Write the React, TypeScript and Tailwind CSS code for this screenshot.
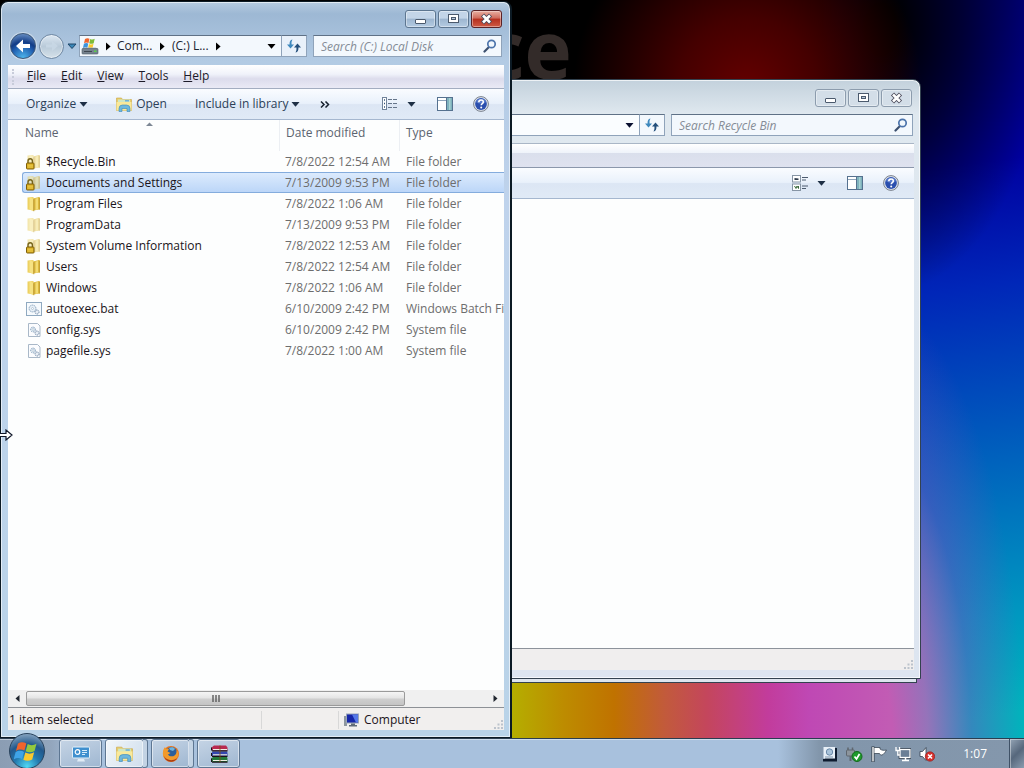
import type { ReactNode } from 'react';
import clsx from 'clsx';

interface FileRow {
    name: string;
    date: string;
    type: string;
    icon: 'locked' | 'folder' | 'faded' | 'batch' | 'system';
}

const files: FileRow[] = [
    { name: '$Recycle.Bin', date: '7/8/2022 12:54 AM', type: 'File folder', icon: 'locked' },
    { name: 'Documents and Settings', date: '7/13/2009 9:53 PM', type: 'File folder', icon: 'locked' },
    { name: 'Program Files', date: '7/8/2022 1:06 AM', type: 'File folder', icon: 'folder' },
    { name: 'ProgramData', date: '7/13/2009 9:53 PM', type: 'File folder', icon: 'faded' },
    { name: 'System Volume Information', date: '7/8/2022 12:53 AM', type: 'File folder', icon: 'locked' },
    { name: 'Users', date: '7/8/2022 12:54 AM', type: 'File folder', icon: 'folder' },
    { name: 'Windows', date: '7/8/2022 1:06 AM', type: 'File folder', icon: 'folder' },
    { name: 'autoexec.bat', date: '6/10/2009 2:42 PM', type: 'Windows Batch File', icon: 'batch' },
    { name: 'config.sys', date: '6/10/2009 2:42 PM', type: 'System file', icon: 'system' },
    { name: 'pagefile.sys', date: '7/8/2022 1:00 AM', type: 'System file', icon: 'system' }
];

const menus = ['File', 'Edit', 'View', 'Tools', 'Help'];

/* ---------- icons ---------- */

function DownArrow({ className = 'text-[#1e2f45]' }: { className?: string }) {
    return (
        <svg width="9" height="5" viewBox="0 0 9 5" className={clsx('shrink-0', className)}>
            <path d="M0.5 0h8L4.5 4.8z" fill="currentColor" />
        </svg>
    );
}

function RightArrow() {
    return (
        <svg width="5" height="9" viewBox="0 0 5 9" className="shrink-0">
            <path d="M0 0.5v8L4.6 4.5z" fill="#000" />
        </svg>
    );
}

function FileIcon({ kind }: { kind: FileRow['icon'] }) {
    if (kind === 'batch' || kind === 'system') {
        return (
            <svg width="16" height="16" viewBox="0 0 16 16" className="shrink-0">
                {kind === 'batch' ? (
                    <rect x="0.5" y="1.5" width="15" height="13" fill="#f6fafd" stroke="#8fa9c0" />
                ) : (
                    <path d="M2.5 1.5h9l2.5 2.5v10.500h-11.500z" fill="#fbfcfe" stroke="#a9b8c8" />
                )}
                <circle cx={kind === 'batch' ? 6.5 : 7} cy="7.5" r={kind === 'batch' ? 3.4 : 2.4} fill="#e8f0f7" stroke="#7f9cb8" strokeDasharray="1.3 0.8" />
                <circle cx={kind === 'batch' ? 6.5 : 7} cy="7.5" r="1" fill="#fff" stroke="#9db3c8" strokeWidth="0.6" />
                <circle cx="11" cy="11" r="2" fill="#e8eef5" stroke="#6d87a5" strokeDasharray="1.2 0.6" />
            </svg>
        );
    }
    const pale = kind !== 'folder';
    return (
        <svg width="16" height="16" viewBox="0 0 16 16" className="shrink-0">
            <g opacity={pale ? 0.5 : 1}>
                <path d="M1.500 1.500l6-0.500v13.500l-6-1z" fill="#edd161" />
                <path d="M7 2.500l6-1.500 1 0.500v12l-7 1z" fill="#dcb93f" />
                <path d="M3.500 1l4 2v12.300l-4-2z" fill="#f6e283" />
                <path d="M7.800 3.200v12" stroke="#b8932c" strokeWidth="0.900" />
                <path d="M9.500 2.400l2.500-0.500v11.700l-2.500 0.500z" fill="#f3dc74" />
                <path d="M13.500 2v11.500" stroke="#c09d35" strokeWidth="0.800" />
            </g>
            {kind === 'locked' && (
                <g>
                    <path d="M2 9.500v-2.500a2.200 2.200 0 0 1 4.400 0v2.500" fill="none" stroke="#77651c" strokeWidth="1.400" />
                    <rect x="0.500" y="9" width="7.500" height="6" rx="0.800" fill="#d9ad1c" stroke="#7d5f0c" />
                    <path d="M1.500 11.200h5.500M1.500 13h5.500" stroke="#f3da6a" strokeWidth="0.700" />
                </g>
            )}
        </svg>
    );
}

function ExplorerIcon({ size = 16 }: { size?: number }) {
    return (
        <svg width={size} height={size} viewBox="0 0 16 16" className="shrink-0">
            <path d="M0.500 2h5l1 1.500h9v11h-15z" fill="#e8cd6a" stroke="#c9a545" strokeWidth="0.600" />
            <rect x="2" y="3.500" width="12" height="4" fill="#cfe7c4" />
            <rect x="9" y="4" width="4" height="1.500" fill="#6fb2d8" />
            <path d="M0.500 6h15v8.500h-15z" fill="#f9e99a" />
            <path d="M3 15.500v-3a3.500 3.500 0 0 1 3.500-3.500h4a3.500 3.500 0 0 1 3.500 3.500v3h-3v-3h-5v3z" fill="#6db8dd" stroke="#3b88b8" strokeWidth="0.600" />
        </svg>
    );
}

function WindowsFlag({ size }: { size: number }) {
    return (
        <svg width={size} height={size} viewBox="0 0 20 20">
            <path d="M3 4.500c2-1.500 4.500-1.500 6.500-0.300L8 9.700c-2-1.200-4.500-1-6.500 0.300z" fill="#f0642c" />
            <path d="M10.500 4.700c2 1.200 4.500 1.200 6.800-0.200l-1.500 5.500c-2.200 1.300-4.700 1.400-6.800 0.200z" fill="#93c83e" />
            <path d="M1.200 11c2-1.300 4.500-1.500 6.500-0.300L6.200 16.200c-2-1.200-4.500-1-6.500 0.300z" fill="#3fa4e8" />
            <path d="M8.700 11.200c2.200 1.200 4.600 1.100 6.800-0.200l-1.500 5.500c-2.200 1.300-4.700 1.400-6.800 0.200z" fill="#fbc92e" />
        </svg>
    );
}

function DriveIcon() {
    return (
        <svg width="18" height="17" viewBox="0 0 18 17" className="shrink-0">
            <path d="M4 1c1.500-1 3-1 4.500-0.300L7.500 5C6 4.300 4.500 4.300 3 5.200z" fill="#f0642c" />
            <path d="M9.200 1c1.500 0.800 3 0.700 4.500-0.200l-1 4.400c-1.500 0.800-3 0.900-4.500 0.100z" fill="#7ebb38" />
            <path d="M2.900 5.800c1.500-0.900 3-0.900 4.400-0.200l-1 4.400c-1.500-0.800-3-0.700-4.400 0.200z" fill="#3c93dc" />
            <path d="M8 5.900c1.500 0.800 3 0.700 4.500-0.100l-1 4.400c-1.500 0.800-3 0.800-4.500 0z" fill="#fbc92e" />
            <path d="M2.500 9.500h12.500l2 2h-16z" fill="#b4bec8" />
            <rect x="1" y="10.500" width="16" height="5.500" rx="0.800" fill="#76828e" stroke="#4f5a66" strokeWidth="0.600" />
            <path d="M3 13.500h8" stroke="#3e4750" />
            <rect x="13" y="12.500" width="2.500" height="1.500" fill="#59d04a" />
        </svg>
    );
}

function RefreshIcon() {
    return (
        <svg width="16" height="14" viewBox="0 0 16 14">
            <path d="M6.500 0.500C4 1 3.400 2.800 3.600 5.500H1L4.500 9.500 8 5.500H5.600C5.400 3.500 5.600 2 6.500 0.500z" fill="#3e88bd" />
            <path d="M9.500 13.500c2.500-0.500 3.100-2.300 2.900-5H15L11.500 4.500 8 8.500h2.400c0.200 2 0 3.500-0.900 5z" fill="#24507c" />
        </svg>
    );
}

function SearchIcon() {
    return (
        <svg width="14" height="14" viewBox="0 0 14 14" className="shrink-0">
            <path d="M5.500 8.500L1.500 12.500" stroke="#3b4f6e" strokeWidth="2.200" strokeLinecap="round" />
            <circle cx="8.500" cy="5" r="3.700" fill="#f2f8fd" stroke="#4c74ab" strokeWidth="1.700" />
        </svg>
    );
}

function DetailsIcon() {
    return (
        <svg width="16" height="14" viewBox="0 0 16 14">
            <rect x="0.500" y="0.500" width="4" height="12" fill="#fff" stroke="#71839a" />
            <path d="M2 3h1M2 6.500h1M2 10h1" stroke="#35537a" strokeWidth="1.400" />
            <path d="M6 2.500h4M11 2.500h4M6 6.500h4M11 6.500h4M6 10.500h4M11 10.500h4" stroke="#65758a" />
        </svg>
    );
}

function TilesIcon() {
    return (
        <svg width="16" height="16" viewBox="0 0 16 16">
            <rect x="0.500" y="0.500" width="8" height="6.500" fill="#fff" stroke="#8795a5" />
            <rect x="0.500" y="9" width="8" height="6.500" fill="#fff" stroke="#8795a5" />
            <path d="M2.500 3v2h4v-1.500z" fill="#2f3d4e" />
            <path d="M2.500 11l1.500 2.500L5 11l1.500 2.500V11" fill="none" stroke="#3c6a3c" />
            <path d="M10 2.500h6M10 5h4M10 11h6M10 13.500h4" stroke="#4c5b6e" />
        </svg>
    );
}

function PaneIcon() {
    return (
        <svg width="16" height="14" viewBox="0 0 16 14">
            <rect x="0.500" y="0.500" width="15" height="13" fill="#fff" stroke="#55718f" />
            <path d="M1 3.500h9" stroke="#8fa5bb" />
            <rect x="10" y="1" width="5" height="12" fill="#7fb3bd" />
            <rect x="12" y="1" width="1.500" height="12" fill="#a8d2d4" />
            <path d="M9.500 1v12" stroke="#55718f" />
        </svg>
    );
}

function HelpIcon() {
    return (
        <svg width="16" height="16" viewBox="0 0 16 16">
            <circle cx="8" cy="8" r="7.400" fill="#dfe5ee" stroke="#79808c" />
            <circle cx="8" cy="8" r="5.900" fill="#2b4fae" />
            <path d="M3 6a5.500 5.500 0 0 1 10 0c-3 2-7 2-10 0z" fill="#6d8fd8" opacity="0.700" />
            <path d="M5.800 6.200c0-3 4.500-2.900 4.500-0.300 0 1.700-2.100 1.700-2.100 3.400" fill="none" stroke="#fff" strokeWidth="1.600" />
            <circle cx="8.200" cy="11.400" r="1" fill="#fff" />
        </svg>
    );
}

function Grip() {
    return (
        <svg width="11" height="11" viewBox="0 0 11 11" className="self-end">
            <path d="M8 1h2v2h-2zM8 4.500h2v2h-2zM8 8h2v2h-2zM4.500 4.500h2v2h-2zM4.500 8h2v2h-2zM1 8h2v2h-2z" fill="#bcc3cc" />
        </svg>
    );
}

/* ---------- window parts ---------- */

function CaptionButtons({ active = false }: { active?: boolean }) {
    const base = 'flex h-[18px] w-[31px] items-center justify-center rounded-[3px] border shadow-[inset_0_0_0_1px_rgba(255,255,255,0.4)]';
    const plain = active
        ? 'border-[#5d7690] bg-[linear-gradient(#c3d5e8_45%,#9db6d0_50%,#b4cbe2)]'
        : 'border-[#8c9cad] bg-[#d3dee8]';
    return (
        <div className="flex justify-end gap-[2px]">
            <button aria-label="Minimize" className={clsx(base, plain)}>
                <svg width="13" height="12" viewBox="0 0 13 12">
                    <rect x="1.500" y="6.500" width="10" height="4" rx="0.500" fill="#fff" stroke="#4b5a6d" />
                </svg>
            </button>
            <button aria-label="Maximize" className={clsx(base, plain)}>
                <svg width="13" height="12" viewBox="0 0 13 12">
                    <rect x="1.500" y="1.500" width="10" height="8" fill="#fff" stroke="#4b5a6d" />
                    <rect x="4.500" y="4.500" width="4" height="2" fill="#b8c8da" stroke="#4b5a6d" />
                </svg>
            </button>
            <button
                aria-label="Close"
                className={clsx(base, active ? 'border-[#5b2226] bg-[linear-gradient(#e3a193_10%,#cf6a5b_45%,#b52f1e_50%,#cf5a44)]' : plain)}
            >
                <svg width="13" height="12" viewBox="0 0 13 12">
                    <path d="M2.500 2l8 8M10.500 2l-8 8" stroke="#4b4a5a" strokeWidth="4.400" />
                    <path d="M3 2.500l7 7M10 2.500l-7 7" stroke="#fff" strokeWidth="2.600" />
                </svg>
            </button>
        </div>
    );
}

function SearchBox({ id, text, className }: { id: string; text: string; className: string }) {
    return (
        <div className={clsx('flex h-[22px] items-center border border-[#8fa3ba] border-t-[#5f7186] bg-[#f3f8fd] pr-1 pl-[7px]', className)}>
            <input
                id={id}
                type="text"
                aria-label={text}
                placeholder={text}
                className="h-full w-full min-w-0 bg-transparent italic outline-none placeholder:text-[#858c96]"
            />
            <SearchIcon />
        </div>
    );
}

function ToolButton({ label, children, className }: { label?: string; children: ReactNode; className?: string }) {
    return (
        <button aria-label={label} className={clsx('flex items-center whitespace-nowrap text-[#2c3f58]', className)}>
            {children}
        </button>
    );
}

const toolbarStyle = 'flex h-[31px] shrink-0 items-center border-b border-[#a5b7cf] bg-[linear-gradient(#fafcff,#e9f1fb_48%,#dce6f4_52%,#e0eaf6)]';

function BackWindow() {
    return (
        <section
            aria-label="Recycle Bin"
            className="absolute top-[79px] right-[103px] bottom-[59px] left-[400px] flex flex-col rounded-t-lg border border-[#33424f] bg-[linear-gradient(#c3d1dc,#dfe8ef_34px,#dde5f0)] px-[6px] pb-[8px] shadow-[inset_0_0_0_1px_rgba(255,255,255,0.7)]"
        >
            <div className="pt-[9px] pr-[2px]">
                <CaptionButtons />
            </div>
            <div className="flex items-center pt-[7px] pr-px pb-[7px]">
                <div className="flex h-[22px] flex-1 items-center justify-end border border-[#8fa3ba] border-t-[#5f7186] bg-[#fafdff] pr-[5px]">
                    <button aria-label="Previous locations">
                        <DownArrow className="text-[#0a1030]" />
                    </button>
                </div>
                <button aria-label="Refresh" className="flex h-[22px] w-[25px] items-center justify-center border border-l-0 border-[#8fa3ba] border-t-[#5f7186] bg-[#f3f8fd]">
                    <RefreshIcon />
                </button>
                <SearchBox id="search-bin" text="Search Recycle Bin" className="ml-[6px] w-[242px]" />
            </div>
            <div className="h-[25px] shrink-0 border-t border-b border-t-[#a9b6c6] border-b-[#8b97ab] bg-[linear-gradient(#ffffff,#eff3fa_38%,#dadfec_40%,#dfe2ef)]" />
            <div className={clsx(toolbarStyle, 'justify-end pr-[15px]')}>
                <ToolButton label="Change your view">
                    <TilesIcon />
                </ToolButton>
                <ToolButton label="More options" className="ml-[9px]">
                    <DownArrow />
                </ToolButton>
                <ToolButton label="Show the preview pane" className="ml-[21px]">
                    <PaneIcon />
                </ToolButton>
                <ToolButton label="Get help" className="ml-[20px]">
                    <HelpIcon />
                </ToolButton>
            </div>
            <div className="flex-1 bg-[#fdfefe]" />
            <div className="flex h-[22px] shrink-0 justify-end border-t border-[#8d939b] bg-[#f0eeee]">
                <Grip />
            </div>
        </section>
    );
}

function NavBar() {
    return (
        <div className="flex items-center pt-[7px] pb-[8px]">
            <button
                aria-label="Back"
                className="my-[-3px] ml-[2px] flex size-[26px] shrink-0 items-center justify-center rounded-full border border-[#3e5878] bg-[radial-gradient(circle_at_50%_100%,#4fb8ee,#1f5cae_45%,#123c86_60%,#7fa6d6)] shadow-[0_0_0_1px_rgba(255,255,255,0.4)]"
            >
                <svg width="16" height="14" viewBox="0 0 16 14">
                    <path d="M8 0.500L1 7l7 6.500V9h7V5H8z" fill="#fff" />
                </svg>
            </button>
            <button
                aria-label="Forward"
                className="my-[-3px] ml-[3px] flex size-[25px] shrink-0 items-center justify-center rounded-full border border-[#6f88a3] bg-[linear-gradient(#dce7f2,#b9cad9_50%,#d5e1ea)] shadow-[inset_0_0_0_1px_rgba(255,255,255,0.4)]"
            >
                <svg width="14" height="12" viewBox="0 0 14 12">
                    <path d="M7 1l6 5-6 5V7.500H1V4.500h6z" fill="#c9d8e6" opacity="0.800" />
                </svg>
            </button>
            <button aria-label="Recent pages" className="ml-[3px]">
                <svg width="10" height="7" viewBox="0 0 10 7">
                    <path d="M1 1h8L5 5.500z" fill="#3a87b8" stroke="#1f4668" />
                </svg>
            </button>
            <div className="ml-[2px] flex h-[22px] w-[203px] items-center border border-[#8fa3ba] border-t-[#5f7186] bg-[#f3f8fd] pl-px">
                <DriveIcon />
                <div className="ml-[7px] flex flex-1 items-center">
                    <RightArrow />
                    <button className="ml-[6px] w-[37px] text-left text-[#1c2430]">Com...</button>
                    <span className="ml-[6px]">
                        <RightArrow />
                    </span>
                    <button className="ml-[7px] w-[38px] text-left whitespace-nowrap text-[#1c2430]">(C:) L...</button>
                    <span className="ml-[6px]">
                        <RightArrow />
                    </span>
                </div>
                <button aria-label="Previous locations" className="pr-[5px]">
                    <DownArrow className="text-black" />
                </button>
            </div>
            <button aria-label="Refresh" className="flex h-[22px] w-[25px] items-center justify-center border border-l-0 border-[#8fa3ba] border-t-[#5f7186] bg-[#e9f1fa]">
                <RefreshIcon />
            </button>
            <SearchBox id="search-disk" text="Search (C:) Local Disk" className="mr-[2px] ml-[6px] flex-1" />
        </div>
    );
}

function FileTable() {
    return (
        <div className="min-h-0 flex-1 overflow-hidden bg-[#fdfefe] pl-[14px]">
            <table className="w-[520px] table-fixed border-separate border-spacing-0 text-left">
                <colgroup>
                    <col className="w-[258px]" />
                    <col className="w-[120px]" />
                    <col />
                </colgroup>
                <thead>
                    <tr className="h-[31px] text-[#5b6470]">
                        <th className="relative border-r border-[#eceff3] pb-[5px] pl-[3px] font-normal">
                            Name
                            <svg width="7" height="4" viewBox="0 0 7 4" className="absolute top-[2px] left-[124px]">
                                <path d="M0 4L3.500 0.500 7 4z" fill="#7d8794" />
                            </svg>
                        </th>
                        <th className="border-r border-[#eceff3] pb-[5px] pl-[6px] font-normal">Date modified</th>
                        <th className="pb-[5px] pl-[6px] font-normal">Type</th>
                    </tr>
                </thead>
                <tbody>
                    {files.map((file) => {
                        const selected = file.name === 'Documents and Settings';
                        const cell = selected && 'border-y border-[#84acdd] bg-[linear-gradient(#dcebfd,#bcd6f8)]';
                        return (
                            <tr key={file.name} aria-selected={selected} className="h-[21px]">
                                <td className={clsx('p-0', cell, selected && 'rounded-l-[3px] border-l')}>
                                    <div className={clsx('flex items-center gap-1 text-[#1a1420]', selected ? 'pl-[3px]' : 'pl-1')}>
                                        <FileIcon kind={file.icon} />
                                        {file.name}
                                    </div>
                                </td>
                                <td className={clsx('p-0 pl-[5px] whitespace-nowrap text-[#6d6d6d]', cell)}>{file.date}</td>
                                <td className={clsx('p-0 pl-[6px] whitespace-nowrap text-[#6d6d6d]', cell)}>{file.type}</td>
                            </tr>
                        );
                    })}
                </tbody>
            </table>
        </div>
    );
}

function FrontWindow() {
    return (
        <section
            aria-label="Local Disk"
            className="absolute top-px bottom-0 left-0 flex w-[512px] flex-col rounded-t-lg border border-r-2 border-[#0c1a24] bg-[linear-gradient(#b6cbe0,#9db8d4_12px,#b3cbe4_60px,#bfd3ec_200px,#b9d3e8)] pr-[6px] pb-[7px] pl-[7px] shadow-[inset_0_0_0_1px_rgba(255,255,255,0.6)]"
        >
            <div className="pt-[8px] pr-[2px]">
                <CaptionButtons active />
            </div>
            <NavBar />
            <nav className="flex h-[24px] shrink-0 items-center border-b border-[#a3adc0] bg-[linear-gradient(#ffffff,#f0f2fa_40%,#dcdcec_60%,#eaeaf5)]">
                <div className="ml-[4px] h-4 border-l-2 border-dotted border-[#c8ccda]" />
                <div className="ml-[13px] flex gap-[15px] pb-px text-[#1c1a28]">
                    {menus.map((menu) => (
                        <button key={menu}>
                            <u>{menu[0]}</u>
                            {menu.slice(1)}
                        </button>
                    ))}
                </div>
            </nav>
            <div className={clsx(toolbarStyle, 'pr-[15px] pl-[18px]')}>
                <ToolButton className="gap-[3px]">
                    Organize <DownArrow />
                </ToolButton>
                <ToolButton className="ml-[28px] gap-1">
                    <ExplorerIcon /> Open
                </ToolButton>
                <ToolButton className="ml-[28px] gap-[3px]">
                    Include in library <DownArrow />
                </ToolButton>
                <ToolButton label="More commands" className="ml-[20px]">
                    <svg width="10" height="7" viewBox="0 0 10 7">
                        <path d="M1 0.500l3 3-3 3M5.500 0.500l3 3-3 3" fill="none" stroke="#16202e" strokeWidth="1.500" />
                    </svg>
                </ToolButton>
                <ToolButton label="Change your view" className="ml-auto">
                    <DetailsIcon />
                </ToolButton>
                <ToolButton label="More options" className="ml-[9px]">
                    <DownArrow />
                </ToolButton>
                <ToolButton label="Show the preview pane" className="ml-[21px]">
                    <PaneIcon />
                </ToolButton>
                <ToolButton label="Get help" className="ml-[20px]">
                    <HelpIcon />
                </ToolButton>
            </div>
            <FileTable />

            {/* horizontal scroll bar */}
            <div className="flex h-[17px] shrink-0 items-center bg-[#f0f0f0]">
                <button aria-label="Scroll left" className="flex w-[18px] justify-center">
                    <svg width="5" height="7" viewBox="0 0 5 7">
                        <path d="M4.500 0v7L0.500 3.500z" fill="#20262e" />
                    </svg>
                </button>
                <div className="flex h-[15px] w-[379px] items-center justify-center gap-px rounded-[2px] border border-[#9a9a9a] bg-[linear-gradient(#f5f5f5,#e4e4e4_48%,#cfcfcf_52%,#c4c4c4)]">
                    <svg width="8" height="7" viewBox="0 0 8 7">
                        <path d="M1 0v7M4 0v7M7 0v7" stroke="#5c5c5c" strokeWidth="1.400" />
                    </svg>
                </div>
                <button aria-label="Scroll right" className="ml-auto flex w-[17px] justify-center">
                    <svg width="5" height="7" viewBox="0 0 5 7">
                        <path d="M0.500 0v7L4.500 3.500z" fill="#20262e" />
                    </svg>
                </button>
            </div>

            <footer className="flex h-[23px] shrink-0 items-center border-t border-[#8d9196] bg-[#f1efee] pt-[2px] text-[#1c1420]">
                <span className="w-[253px] pl-px">1 item selected</span>
                <span className="h-[18px] w-[78px] border-x border-[#d8d8d8]" />
                <span className="flex flex-1 items-center gap-1 pl-1">
                    <svg width="17" height="16" viewBox="0 0 17 16">
                        <rect x="1" y="4" width="3" height="10" fill="#8d969e" />
                        <rect x="3.500" y="2" width="12" height="9" fill="#1626a8" stroke="#9aa6b8" />
                        <path d="M9 2.500h6v8h-2z" fill="#5578e8" />
                        <path d="M8 11.500h4v1.500h2v1.500h-8v-1.500h2z" fill="#5f6a76" />
                    </svg>
                    Computer
                </span>
                <Grip />
            </footer>
        </section>
    );
}

/* ---------- taskbar ---------- */

function TaskButton({ label, active, stacked, children }: { label: string; active?: boolean; stacked?: boolean; children: ReactNode }) {
    return (
        <button
            aria-label={label}
            className={clsx(
                'flex h-[29px] items-center justify-center rounded-[3px] border border-[#5d7692] shadow-[inset_0_0_0_1px_rgba(255,255,255,0.5)]',
                active ? 'bg-[linear-gradient(120deg,#f2f6fa,#cfdeec)]' : 'bg-[linear-gradient(160deg,#c5d4e5,#9fb7d1)]',
                stacked ? 'w-[39px]' : 'w-[43px]'
            )}
        >
            {children}
        </button>
    );
}

function StackEdge() {
    return <div className="ml-[-1px] h-[29px] w-[5px] rounded-r-[3px] border border-l-0 border-[#5d7692] bg-[#c3d3e4]" />;
}

function Taskbar() {
    return (
        <footer className="relative z-10 flex h-[30px] shrink-0 items-center border-t border-[#2b3d50] bg-[linear-gradient(90deg,#8b9db3,#93a6bd_5%,#a8c1dd_8%,#a8c1dd_76%,#8296ab_80%,#8497ac)] shadow-[inset_0_1px_0_rgba(255,255,255,0.45)]">
            <button
                aria-label="Start"
                className="absolute top-[-6px] left-[9px] flex size-[36px] items-center justify-center rounded-full border border-[#28425c] bg-[radial-gradient(circle_at_50%_95%,#4fd8f4,#2479ae_35%,#22588c_60%,#a9bfd2)]"
            >
                <WindowsFlag size={26} />
            </button>
            <div className="ml-[59px] flex items-center">
                <TaskButton label="System settings">
                    <svg width="18" height="16" viewBox="0 0 18 16">
                        <rect x="0.500" y="1" width="17" height="11" rx="1" fill="#3f8fce" stroke="#e3f0fa" />
                        <circle cx="5.500" cy="6" r="2.300" fill="none" stroke="#fff" strokeWidth="1.200" />
                        <path d="M10 4.500h5M10 6.500h5M10 8.500h3" stroke="#d7ecfa" />
                        <path d="M6 13h6l1 2.500h-8z" fill="#e1ecf5" />
                    </svg>
                </TaskButton>
                <div className="ml-[3px] flex">
                    <TaskButton label="File Explorer" active stacked>
                        <ExplorerIcon size={17} />
                    </TaskButton>
                    <StackEdge />
                </div>
                <div className="ml-[3px] flex">
                    <TaskButton label="Firefox" stacked>
                        <svg width="18" height="18" viewBox="0 0 18 18">
                            <circle cx="9" cy="9" r="8" fill="#e8731c" />
                            <circle cx="9.500" cy="7.500" r="5.500" fill="#2c5f9c" />
                            <path d="M7 3c2-1.500 5-1 6 1l-2 2-3-1z" fill="#6fb4dc" />
                            <path d="M1 7c0-2 1-4 2-5l1 2c1-0.500 2-0.500 3 0L5.500 6.500l3 1.500-2.500 1.500c1 2 4.500 2.500 6.500 1 1.500-1 2.300-3 2-5.500 1.500 1.500 2 3 1.800 5a7.500 7.500 0 0 1-15.300-3z" fill="#f29a2c" />
                            <path d="M2 11c2 4 8 6 13 2-2 5-11 5.500-13-2z" fill="#a83a14" />
                        </svg>
                    </TaskButton>
                    <StackEdge />
                </div>
                <div className="ml-[3px]">
                    <TaskButton label="WinRAR">
                        <svg width="18" height="18" viewBox="0 0 18 18">
                            <path d="M1 3l3-2.500h12l1.500 2v3h-15z" fill="#b92a50" />
                            <path d="M1 8.500l2-2h14l0.500 1.500v3h-15z" fill="#3447b0" />
                            <path d="M1 14l2-2h14l0.500 1.500v3.500h-15z" fill="#247a3a" />
                            <path d="M3 4.500h14M3 9.800h14M3 15.500h14" stroke="#f0efe4" strokeWidth="1.200" />
                            <path d="M2 5.800h15.500M2 11.300h15.500M2 17.200h15.500" stroke="#1c1218" strokeWidth="1.200" />
                            <path d="M1.500 2.500v3M1.500 8v3M1.500 13.500v3.500" stroke="#1c1218" />
                            <path d="M9 0.500h2v17h-2z" fill="#7c4c1c" opacity="0.400" />
                        </svg>
                    </TaskButton>
                </div>
            </div>

            {/* notification area */}
            <div className="ml-auto flex h-full items-center">
                <div className="flex items-center gap-2">
                    <svg width="16" height="16" viewBox="0 0 16 16">
                        <path d="M3 2h12v13.500h-14v-2.500h2z" fill="#0f1c30" />
                        <path d="M1.500 1h11.500v11.500h-11.500z" fill="#e8f0f8" />
                        <circle cx="7.500" cy="6" r="3.200" fill="#a9c3da" stroke="#6a89a8" />
                        <path d="M3 11h8" stroke="#7f97ae" />
                    </svg>
                    <svg width="17" height="16" viewBox="0 0 17 16">
                        <path d="M2 1.500v3M6.500 1.500v3" stroke="#5f666e" strokeWidth="1.500" />
                        <rect x="0.500" y="4" width="8" height="6" rx="1" fill="#8d959d" stroke="#5f666e" />
                        <path d="M4.500 10v5" stroke="#5f666e" strokeWidth="2" />
                        <circle cx="11" cy="10.500" r="5" fill="#1f9a2c" stroke="#146a1c" />
                        <path d="M8.500 10.500l2 2.500 3-5" fill="none" stroke="#fff" strokeWidth="1.700" />
                    </svg>
                    <svg width="16" height="16" viewBox="0 0 16 16">
                        <path d="M2 0.500v15.500" stroke="#26323f" strokeWidth="3" />
                        <path d="M3 1.500h6v1.500c2 1.500 4 1.500 6.500 1-1 1.500-2.500 4.500-4.500 5-1.500 0.300-2-0.500-2.500-1.500H3z" fill="#fff" stroke="#3b4856" strokeWidth="0.800" />
                        <path d="M2 1v14.500" stroke="#fff" strokeWidth="1.400" />
                    </svg>
                    <svg width="16" height="16" viewBox="0 0 16 16">
                        <rect x="5" y="3.500" width="10" height="8" fill="#7d90a6" stroke="#1f2b3a" strokeWidth="2.600" />
                        <rect x="5" y="3.500" width="10" height="8" fill="#6b7f96" stroke="#fff" strokeWidth="1.300" />
                        <path d="M7 14.500h7M10.500 12v2.500" stroke="#fff" strokeWidth="1.500" />
                        <path d="M1 1v3.500h3.500V1M2.800 4.500V9h2" fill="none" stroke="#fff" strokeWidth="1.300" />
                    </svg>
                    <svg width="16" height="16" viewBox="0 0 16 16">
                        <path d="M1 5.500h2.500L7 1.500v13L3.500 10.500H1z" fill="#fff" stroke="#33404e" strokeWidth="0.800" />
                        <circle cx="11" cy="10.500" r="4.700" fill="#d6302c" stroke="#8e1a1a" strokeWidth="0.600" />
                        <path d="M9 8.500l4 4M13 8.500l-4 4" stroke="#fff" strokeWidth="1.600" />
                    </svg>
                </div>
                <time className="ml-[28px] text-white">1:07</time>
                <button
                    aria-label="Show desktop"
                    className="ml-[22px] h-full w-[15px] border-l border-[#3f5166] bg-[linear-gradient(135deg,#95a5b6,#56677c_50%,#8a9bae)] shadow-[inset_1px_1px_0_rgba(255,255,255,0.4)]"
                />
            </div>
        </footer>
    );
}

export default function App() {
    return (
        <div className="flex h-screen flex-col overflow-hidden bg-black font-['Open_Sans','Noto_Sans',sans-serif] text-xs leading-4">
            <main className="relative flex-1 overflow-hidden bg-[linear-gradient(172deg,#000050,#00007c_14%,#0000a0_34%,#0026b8_48%,#0062bd_68%,#0098c0_86%,#00b4bc_97%)]">
                {/* wallpaper glows */}
                <div className="absolute inset-0 bg-[radial-gradient(ellipse_16%_36%_at_86%_4%,#000_10%,rgba(0,0,0,0.6)_50%,transparent)]" />
                <div className="absolute inset-x-0 top-0 h-20 bg-[radial-gradient(ellipse_17%_220%_at_73%_110%,#640000,#440000_40%,transparent),linear-gradient(90deg,#000_80%,transparent_89%)]" />
                <div className="absolute inset-0 bg-[radial-gradient(ellipse_17%_64%_at_83%_102%,#c25cb4_25%,rgba(186,100,185,0.8)_45%,rgba(130,70,190,0.4)_70%,transparent)]" />
                <div className="absolute inset-x-0 bottom-0 h-[60px] bg-[linear-gradient(90deg,#b5ae00_50%,#bd8c00_55%,#c07200_60%,#c25a3c_65%,#c4465c_69%,#c23c9c_75%,#bf48b4_79%,transparent_87%)]" />
                <div className="absolute top-0 right-[452px] font-['Noto_Sans',sans-serif] text-[80px] leading-[96px] font-bold text-[#332b29]">Service</div>

                <div className="absolute top-[100px] right-[107px] bottom-[55px] left-[400px] border border-[#33424f] bg-[#dde5ee]" />
                <BackWindow />
                <FrontWindow />

                {/* resize cursor */}
                <svg width="13" height="12" viewBox="0 0 13 12" className="absolute top-[429px] left-0">
                    <path d="M-1 4.500h7v-3.500l6 5-6 5v-3.500h-7z" fill="#fff" stroke="#10182a" strokeWidth="1.200" />
                </svg>
            </main>
            <Taskbar />
        </div>
    );
}
